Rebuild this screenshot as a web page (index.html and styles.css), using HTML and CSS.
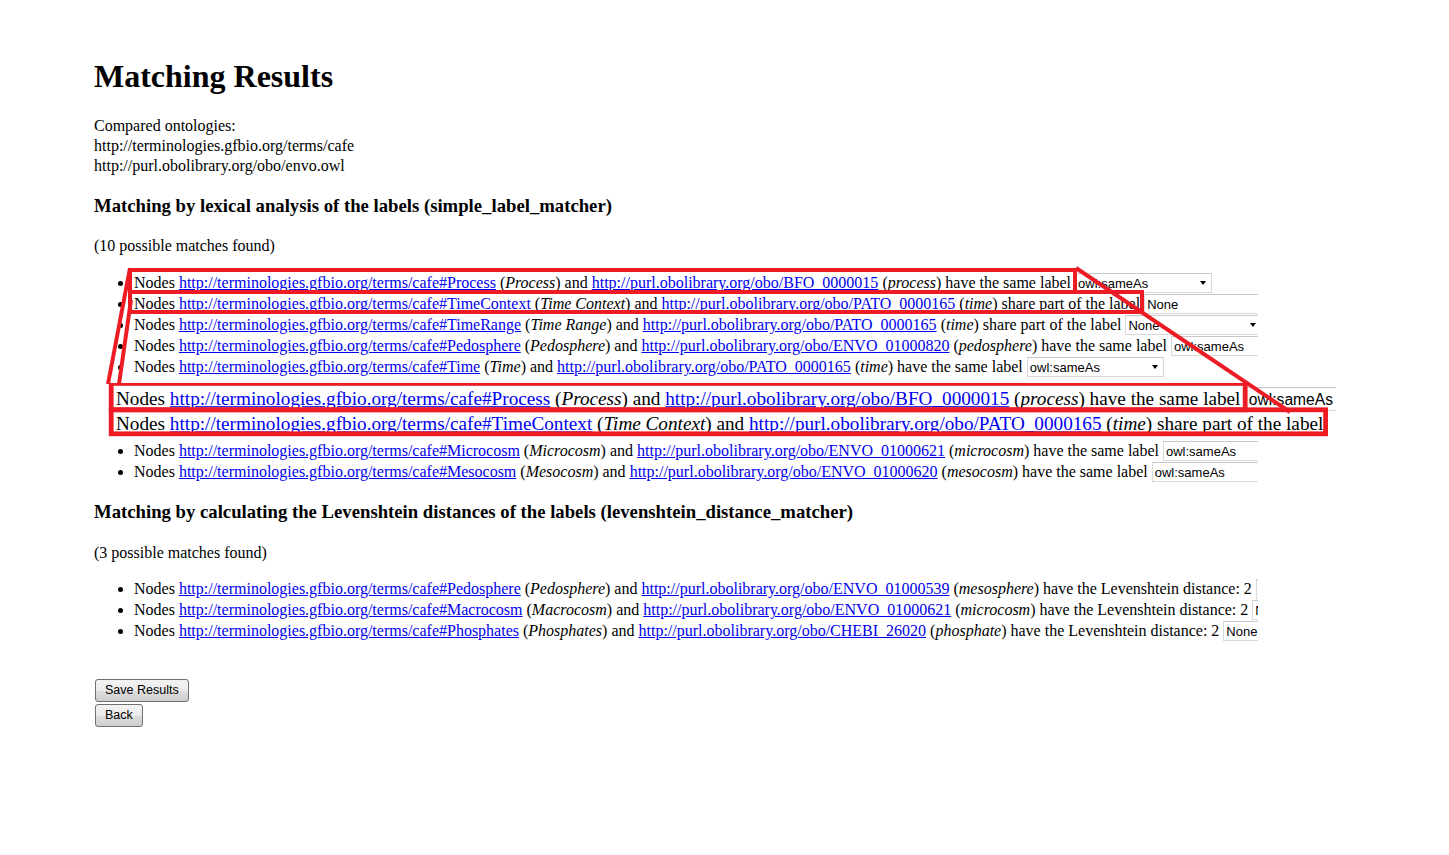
FILE: index.html
```html
<!DOCTYPE html>
<html lang="en">
<head>
<meta charset="utf-8">
<title>Matching Results</title>
<link rel="stylesheet" href="styles.css">
</head>
<body>
<div class="page">
  <h1 class="title">Matching Results</h1>
  <p class="compared">Compared ontologies:<br>http://terminologies.gfbio.org/terms/cafe<br>http://purl.obolibrary.org/obo/envo.owl</p>

  <h3 class="section">Matching by lexical analysis of the labels (simple_label_matcher)</h3>
  <p class="count">(10 possible matches found)</p>
  <ul class="matches">
    <li>Nodes <a href="#">http://terminologies.gfbio.org/terms/cafe#Process</a> (<i>Process</i>) and <a href="#">http://purl.obolibrary.org/obo/BFO_0000015</a> (<i>process</i>) have the same label <span class="sel"><select><option>owl:sameAs</option><option>None</option></select></span></li>
    <li>Nodes <a href="#">http://terminologies.gfbio.org/terms/cafe#TimeContext</a> (<i>Time Context</i>) and <a href="#">http://purl.obolibrary.org/obo/PATO_0000165</a> (<i>time</i>) share part of the label <span class="sel"><select><option>None</option><option>owl:sameAs</option></select></span></li>
    <li>Nodes <a href="#">http://terminologies.gfbio.org/terms/cafe#TimeRange</a> (<i>Time Range</i>) and <a href="#">http://purl.obolibrary.org/obo/PATO_0000165</a> (<i>time</i>) share part of the label <span class="sel"><select><option>None</option><option>owl:sameAs</option></select></span></li>
    <li>Nodes <a href="#">http://terminologies.gfbio.org/terms/cafe#Pedosphere</a> (<i>Pedosphere</i>) and <a href="#">http://purl.obolibrary.org/obo/ENVO_01000820</a> (<i>pedosphere</i>) have the same label <span class="sel"><select><option>owl:sameAs</option><option>None</option></select></span></li>
    <li>Nodes <a href="#">http://terminologies.gfbio.org/terms/cafe#Time</a> (<i>Time</i>) and <a href="#">http://purl.obolibrary.org/obo/PATO_0000165</a> (<i>time</i>) have the same label <span class="sel"><select><option>owl:sameAs</option><option>None</option></select></span></li>
    <li class="covered"></li>
    <li class="covered"></li>
    <li class="covered"></li>
    <li>Nodes <a href="#">http://terminologies.gfbio.org/terms/cafe#Microcosm</a> (<i>Microcosm</i>) and <a href="#">http://purl.obolibrary.org/obo/ENVO_01000621</a> (<i>microcosm</i>) have the same label <span class="sel"><select><option>owl:sameAs</option><option>None</option></select></span></li>
    <li>Nodes <a href="#">http://terminologies.gfbio.org/terms/cafe#Mesocosm</a> (<i>Mesocosm</i>) and <a href="#">http://purl.obolibrary.org/obo/ENVO_01000620</a> (<i>mesocosm</i>) have the same label <span class="sel"><select><option>owl:sameAs</option><option>None</option></select></span></li>
  </ul>

  <h3 class="section">Matching by calculating the Levenshtein distances of the labels (levenshtein_distance_matcher)</h3>
  <p class="count count2">(3 possible matches found)</p>
  <ul class="matches matches2">
    <li>Nodes <a href="#">http://terminologies.gfbio.org/terms/cafe#Pedosphere</a> (<i>Pedosphere</i>) and <a href="#">http://purl.obolibrary.org/obo/ENVO_01000539</a> (<i>mesosphere</i>) have the Levenshtein distance: 2 <span class="sel"><select><option>None</option><option>owl:sameAs</option></select></span></li>
    <li>Nodes <a href="#">http://terminologies.gfbio.org/terms/cafe#Macrocosm</a> (<i>Macrocosm</i>) and <a href="#">http://purl.obolibrary.org/obo/ENVO_01000621</a> (<i>microcosm</i>) have the Levenshtein distance: 2 <span class="sel"><select><option>None</option><option>owl:sameAs</option></select></span></li>
    <li>Nodes <a href="#">http://terminologies.gfbio.org/terms/cafe#Phosphates</a> (<i>Phosphates</i>) and <a href="#">http://purl.obolibrary.org/obo/CHEBI_26020</a> (<i>phosphate</i>) have the Levenshtein distance: 2 <span class="sel"><select><option>None</option><option>owl:sameAs</option></select></span></li>
  </ul>

  <div class="actions">
    <button class="btn" type="button">Save Results</button>
    <button class="btn" type="button">Back</button>
  </div>
</div>

<div class="inset">
  <div class="inset-scale">
    <div class="replica">
      <ul class="matches replica-list">
        <li>Nodes <a href="#">http://terminologies.gfbio.org/terms/cafe#Process</a> (<i>Process</i>) and <a href="#">http://purl.obolibrary.org/obo/BFO_0000015</a> (<i>process</i>) have the same label <span class="sel"><select><option>owl:sameAs</option></select></span></li>
        <li>Nodes <a href="#">http://terminologies.gfbio.org/terms/cafe#TimeContext</a> (<i>Time Context</i>) and <a href="#">http://purl.obolibrary.org/obo/PATO_0000165</a> (<i>time</i>) share part of the label</li>
      </ul>
    </div>
    <svg class="replica-boxes" width="1449" height="400" viewBox="0 0 1449 400">
      <rect x="130" y="270" width="945" height="22"/>
      <rect x="130" y="292" width="1012" height="20"/>
    </svg>
  </div>
</div>

<svg class="annotations" width="1449" height="855" viewBox="0 0 1449 855">
  <rect x="130" y="270" width="945" height="22"/>
  <rect x="130" y="292" width="1012" height="20"/>
  <line x1="130" y1="268" x2="108" y2="384"/>
  <line x1="131" y1="300" x2="119" y2="384"/>
  <line x1="1076" y1="268" x2="1290" y2="412"/>
</svg>
</body>
</html>
```

FILE: styles.css
```css
html, body {
  margin: 0;
  padding: 0;
  background: #fff;
}

body {
  position: relative;
  width: 1449px;
  min-height: 855px;
  font-family: "Liberation Serif", "Times New Roman", serif;
  font-size: 16px;
  color: #000;
}

.page {
  width: 1164px;
  padding: 58px 0 60px 94px;
  overflow: hidden;
}

.title {
  margin: 0;
  font-size: 32px;
  line-height: 36px;
  font-weight: bold;
}

.compared {
  margin: 22px 0 0;
  line-height: 20px;
}

.section {
  margin: 19px 0 0;
  font-size: 18.72px;
  line-height: 22px;
  font-weight: bold;
}

.count {
  margin: 19px 0 0;
  line-height: 20px;
}

.count2 {
  margin-top: 20px;
}

.matches {
  margin: 16px 0 0;
  padding: 0 0 0 40px;
}

.matches2 {
  margin-top: 15px;
}

.matches li {
  height: 21px;
  line-height: 21px;
  white-space: nowrap;
}

.matches li.covered {
  visibility: hidden;
}

.matches a {
  color: #0000ee;
}

.sel {
  position: relative;
  display: inline-block;
  vertical-align: top;
  margin-top: 1px;
  height: 20px;
  line-height: normal;
}

.sel select {
  -webkit-appearance: none;
  appearance: none;
  display: block;
  box-sizing: border-box;
  width: 137px;
  height: 20px;
  margin: 0;
  padding: 0 0 0 2px;
  border: 1px solid #d9d9d9;
  border-top-color: #c8c8c8;
  border-radius: 0;
  background: #fff;
  color: #000;
  font-family: "Liberation Sans", Arial, sans-serif;
  font-size: 13px;
}

.sel::after {
  content: "";
  position: absolute;
  right: 6px;
  top: 8px;
  border-left: 3.5px solid transparent;
  border-right: 3.5px solid transparent;
  border-top: 4px solid #000;
}

.actions {
  margin-top: 38px;
  display: flex;
  flex-direction: column;
  align-items: flex-start;
  gap: 2px;
  padding-left: 1px;
}

.btn {
  box-sizing: border-box;
  height: 23px;
  margin: 0;
  padding: 0 9px;
  border: 1px solid #707070;
  border-radius: 3px;
  background: linear-gradient(#f2f2f2 0%, #ebebeb 50%, #dddddd 50%, #cfcfcf 100%);
  color: #000;
  font-family: "Liberation Sans", Arial, sans-serif;
  font-size: 12.5px;
  line-height: 21px;
}

/* magnified inset */
.inset {
  position: absolute;
  left: 104px;
  top: 383px;
  width: 1232px;
  height: 58px;
  overflow: hidden;
  background: #fff;
  z-index: 1;
}

.inset-scale {
  position: relative;
  width: 1449px;
  height: 400px;
  transform-origin: 0 0;
  transform: scale(1.2) translate(-124px, -269.67px);
}

.replica {
  padding: 272px 0 0 94px;
}

.replica-list {
  margin: 0;
}

.replica-boxes {
  position: absolute;
  left: 0;
  top: 0;
}

.replica-boxes rect,
.annotations rect {
  fill: none;
  stroke: #ed1c24;
  stroke-width: 4;
}

.annotations {
  position: absolute;
  left: 0;
  top: 0;
  z-index: 2;
  pointer-events: none;
}

.annotations line {
  stroke: #ed1c24;
  stroke-width: 4;
}
```
